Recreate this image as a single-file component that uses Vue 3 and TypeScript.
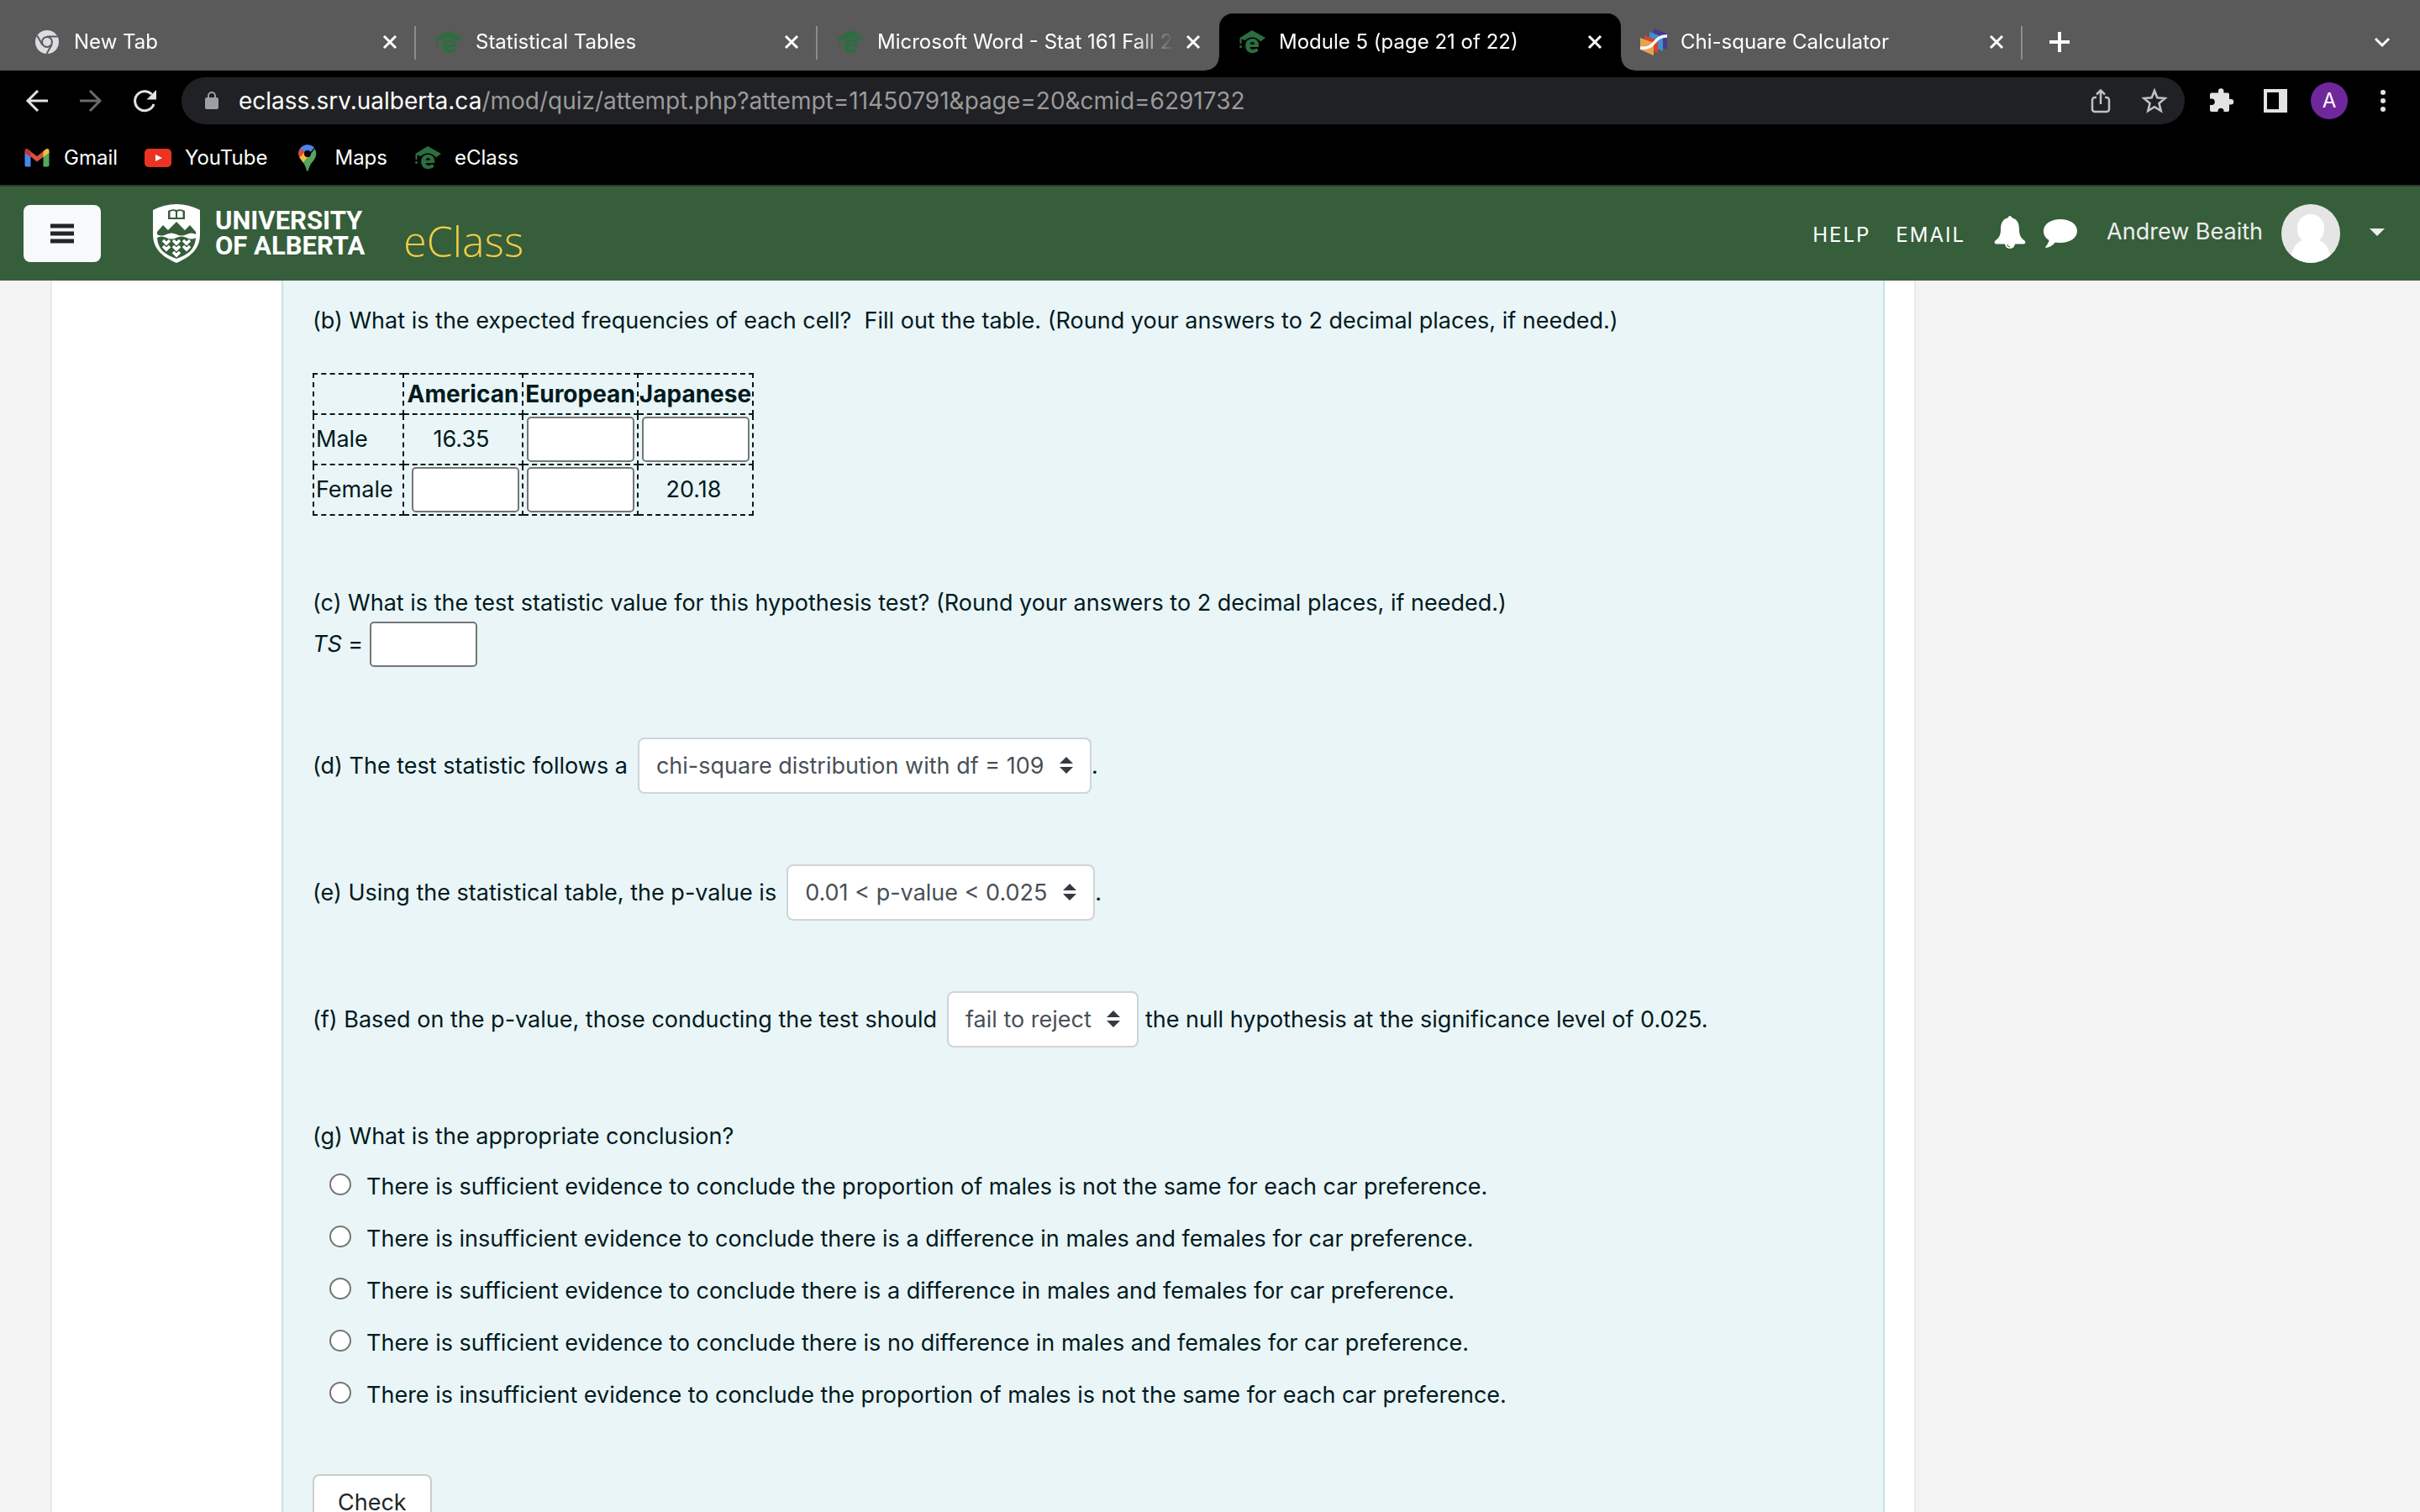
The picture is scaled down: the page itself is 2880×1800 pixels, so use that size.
<script setup lang="ts">
import { ref } from 'vue'

interface Tab {
  title: string
  icon: 'chrome' | 'eclass' | 'stats'
  active?: boolean
}

const tabs: Tab[] = [
  { title: 'New Tab', icon: 'chrome' },
  { title: 'Statistical Tables', icon: 'eclass' },
  { title: 'Microsoft Word - Stat 161 Fall 2', icon: 'eclass' },
  { title: 'Module 5 (page 21 of 22)', icon: 'eclass', active: true },
  { title: 'Chi-square Calculator', icon: 'stats' },
]

const conclusions: string[] = [
  'There is sufficient evidence to conclude the proportion of males is not the same for each car preference.',
  'There is insufficient evidence to conclude there is a difference in males and females for car preference.',
  'There is sufficient evidence to conclude there is a difference in males and females for car preference.',
  'There is sufficient evidence to conclude there is no difference in males and females for car preference.',
  'There is insufficient evidence to conclude the proportion of males is not the same for each car preference.',
]

const maleEuropean = ref('')
const maleJapanese = ref('')
const femaleAmerican = ref('')
const femaleEuropean = ref('')
const testStatistic = ref('')
const conclusion = ref<number | null>(null)
</script>

<template>
  <div class="browser">
    <nav class="tabs" aria-label="Tabs">
      <div v-for="(tab, i) in tabs" :key="i" class="tab" :class="{ active: tab.active, plain: i === 2 }">
        <svg v-if="tab.icon === 'chrome'" class="fav" viewBox="0 0 32 32">
          <circle cx="16" cy="16" r="14" fill="#dcdde0" />
          <circle cx="16" cy="16" r="6" fill="#dcdde0" stroke="#5a5a5a" stroke-width="2" />
          <path d="M16 9.500H28.500M10.400 19.300 4.200 8.600M21.600 19.300 15.600 29.800" stroke="#5a5a5a" stroke-width="2" fill="none" />
        </svg>
        <svg v-else-if="tab.icon === 'eclass'" class="fav cap" viewBox="0 0 32 32">
          <path d="M16 2 32 11 26 15.500C22 9.500 12 8.500 8 14L3.500 12.500V18H1.500V11Z" />
          <circle cx="2.500" cy="21.500" r="1.500" />
          <text x="16" y="29" text-anchor="middle">e</text>
        </svg>
        <svg v-else class="fav" viewBox="0 0 32 32">
          <path d="M16 0 32 6V25L16 18Z" fill="#4c3790" />
          <path d="M11 4 27 10V27L11 20Z" fill="#3e8fd0" />
          <path d="M5 8 21 14V29L5 23Z" fill="#d3462f" />
          <path d="M0 11 16 17V32L0 25Z" fill="#e6a44c" />
          <path d="M0 23C19 26 15 8 32 9" stroke="#fff" stroke-width="3.500" fill="none" />
        </svg>
        <span class="tab-title">{{ tab.title }}</span>
        <button class="icon-btn" aria-label="Close tab">
          <svg width="18" height="18" viewBox="0 0 18 18"><path d="M2 2 16 16M16 2 2 16" stroke="#fff" stroke-width="3" /></svg>
        </button>
      </div>
      <button class="icon-btn new-tab" aria-label="New tab">
        <svg width="26" height="26" viewBox="0 0 26 26"><path d="M13 1V25M1 13H25" stroke="#fff" stroke-width="4" /></svg>
      </button>
      <button class="icon-btn tab-search" aria-label="Search tabs">
        <svg width="20" height="20" viewBox="0 0 20 20"><path d="M2 6 10 14 18 6" stroke="#fff" stroke-width="3" fill="none" /></svg>
      </button>
    </nav>

    <div class="toolbar">
      <div class="nav-btns">
        <button class="icon-btn" aria-label="Back">
          <svg width="32" height="32" viewBox="0 0 32 32"><path d="M29 16H5M17 4 5 16 17 28" stroke="#e3e3e3" stroke-width="3" fill="none" /></svg>
        </button>
        <button class="icon-btn" aria-label="Forward">
          <svg width="32" height="32" viewBox="0 0 32 32"><path d="M3 16H27M15 4 27 16 15 28" stroke="#6a6a6a" stroke-width="3" fill="none" /></svg>
        </button>
        <button class="icon-btn" aria-label="Reload">
          <svg width="32" height="32" viewBox="0 0 32 32">
            <path d="M27 20A11.500 11.500 0 1 1 24.500 8.300" stroke="#e3e3e3" stroke-width="3" fill="none" />
            <path d="M30 3V14.500H18.500Z" fill="#e3e3e3" />
          </svg>
        </button>
      </div>
      <div class="omnibox">
        <svg width="20" height="24" viewBox="0 0 20 24">
          <rect x="2" y="8" width="16" height="14" rx="2" fill="#9aa0a6" />
          <path d="M6 9V6A4 4 0 0 1 14 6V9" stroke="#9aa0a6" stroke-width="2" fill="none" />
        </svg>
        <span class="url"><b>eclass.srv.ualberta.ca</b>/mod/quiz/attempt.php?attempt=11450791&amp;page=20&amp;cmid=6291732</span>
        <button class="icon-btn" aria-label="Share">
          <svg width="32" height="32" viewBox="0 0 32 32">
            <path d="M11 12H9A3 3 0 0 0 6 15V26A3 3 0 0 0 9 29H23A3 3 0 0 0 26 26V15A3 3 0 0 0 23 12H21M16 20V4M11 8.500 16 3.500 21 8.500" stroke="#c0c1c4" stroke-width="2.500" fill="none" />
          </svg>
        </button>
        <button class="icon-btn" aria-label="Bookmark this page">
          <svg width="32" height="32" viewBox="0 0 32 32">
            <path d="M16 4 19.300 12.300 28.500 13 21.500 19 23.700 28 16 23.200 8.300 28 10.500 19 3.500 13 12.700 12.300Z" stroke="#c0c1c4" stroke-width="2.600" fill="none" />
          </svg>
        </button>
      </div>
      <div class="actions">
        <button class="icon-btn" aria-label="Extensions">
          <svg width="32" height="32" viewBox="0 0 32 32">
            <path d="M12 6.500V4.500A3.200 3.200 0 0 1 18.400 4.500V6.500H23A2 2 0 0 1 25 8.500V14H27A3.200 3.200 0 0 1 27 20.400H25V27A2 2 0 0 1 23 29H18.500V27.500A3.600 3.600 0 0 0 11.500 27.500V29H4A2 2 0 0 1 2 27V21H4A3.600 3.600 0 0 0 4 13.500H2V8.500A2 2 0 0 1 4 6.500Z" fill="#e3e3e3" />
          </svg>
        </button>
        <button class="icon-btn" aria-label="Side panel">
          <svg width="32" height="32" viewBox="0 0 32 32"><path d="M2 2H30V30H2ZM6 6V26H20V6Z" fill="#e3e3e3" fill-rule="evenodd" /></svg>
        </button>
        <button class="profile" aria-label="Profile">A</button>
        <button class="icon-btn" aria-label="Menu">
          <svg width="32" height="32" viewBox="0 0 32 32" fill="#e3e3e3"><circle cx="16" cy="6" r="3" /><circle cx="16" cy="16" r="3" /><circle cx="16" cy="26" r="3" /></svg>
        </button>
      </div>
    </div>

    <nav class="bookmarks" aria-label="Bookmarks">
      <a href="#">
        <svg width="32" height="32" viewBox="0 0 32 32">
          <path d="M1.500 9V24.500A2 2 0 0 0 3.500 26.500H8.500V14Z" fill="#4c86ee" />
          <path d="M23.500 14V26.500H28.500A2 2 0 0 0 30.500 24.500V9Z" fill="#58a55c" />
          <path d="M8 14V8L16 14 24 8V14.500L16 20.500Z" fill="#d9503f" />
          <path d="M1.500 10V7.500C1.500 4.500 4.500 4.500 6 6L8.500 8V15Z" fill="#b63a31" />
          <path d="M30.500 10V7.500C30.500 4.500 27.500 4.500 26 6L23.500 8V15Z" fill="#f2bd42" />
        </svg>
        Gmail
      </a>
      <a href="#">
        <svg width="32" height="32" viewBox="0 0 32 32">
          <rect y="5" width="32" height="22" rx="5" fill="#ea3323" />
          <path d="M13 12 21 16 13 20Z" fill="#fff" />
        </svg>
        YouTube
      </a>
      <a href="#">
        <svg width="32" height="32" viewBox="0 0 32 32">
          <path d="M7 5C11-1 20-1 24 4L10 20 7 16C4.500 12 5 8 7 5Z" fill="#4f83e8" />
          <path d="M7.500 4.500 13 9 7 16C4.500 12 4.800 8 7.500 4.500Z" fill="#dd4b3e" />
          <path d="M13 9 6.500 15.500 11 22 20 11Z" fill="#f2bd42" />
          <path d="M24.500 5C28 11 26 16 22 20.500 19 24 18 27 16.500 31.500H15C14 27 13 25 11 22L20 11Z" fill="#58a55c" />
          <circle cx="16" cy="11" r="4" fill="#000" />
        </svg>
        Maps
      </a>
      <a href="#">
        <svg class="cap" width="32" height="32" viewBox="0 0 32 32">
          <path d="M16 2 32 11 26 15.500C22 9.500 12 8.500 8 14L3.500 12.500V18H1.500V11Z" />
          <circle cx="2.500" cy="21.500" r="1.500" />
          <text x="16" y="29" text-anchor="middle">e</text>
        </svg>
        eClass
      </a>
    </nav>

    <header class="site-header">
      <button class="burger" aria-label="Side panel">
        <svg width="28" height="24" viewBox="0 0 28 24"><path d="M0 3H28M0 12H28M0 21H28" stroke="#212529" stroke-width="5" /></svg>
      </button>
      <a class="brand" href="#">
        <svg width="56" height="70" viewBox="0 0 56 70">
          <path d="M0 7Q14 0 28 0T56 7V36C56 54 44 63 28 70 12 63 0 54 0 36Z" fill="#fff" />
          <path d="M18 8Q23 5 28 7 33 5 38 8V18H18Z" fill="#365e3b" />
          <path d="M20.500 9Q24 7 27 9V16H20.500ZM29 9Q32 7 35.500 9V16H29Z" fill="#fff" />
          <path d="M5 36V33L12 25 18 31 28 21 38 31 44 25 51 33V36Q46 33 40 36T28 36 16 36 5 36Z" fill="#365e3b" />
          <path d="M5 40Q10 37 16 40T28 40 40 40 51 40C50 54 42 60 28 65 14 60 6 54 5 40Z" fill="#365e3b" />
          <path d="M12 43 16 47 20 43M12 50 16 54 20 50M24 43 28 47 32 43M24 50 28 54 32 50M24 57 28 61 32 57M36 43 40 47 44 43M36 50 40 54 44 50" stroke="#fff" stroke-width="3.500" fill="none" />
        </svg>
        <span class="wordmark">UNIVERSITY<br />OF ALBERTA</span>
        <span class="product">eClass</span>
      </a>
      <nav class="links">
        <a href="#">HELP</a>
        <a href="#">EMAIL</a>
      </nav>
      <button class="icon-btn bell" aria-label="Notifications">
        <svg width="38" height="40" viewBox="0 0 38 40">
          <path d="M17 3A2 2 0 0 1 21 3C28 5 30 10 30 17 30 25 33 28 37 31 38 33 37 34.500 35 34.500H3C1 34.500 0 33 1 31 5 28 8 25 8 17 8 10 10 5 17 3Z" fill="#fff" />
          <path d="M13 34A6 6 0 0 0 25 34Z" fill="#fff" />
          <path d="M16 35A3 3 0 0 0 19 38" stroke="#365e3b" fill="none" />
        </svg>
      </button>
      <button class="icon-btn" aria-label="Messages">
        <svg width="42" height="36" viewBox="0 0 42 36">
          <path d="M21 1C32 1 41 6.500 41 15S32 29 21 29C19 29 17 29 15 28.500 12 32 8 34.500 4 35 3 35 3 34 4 33 6 31 7 28 7.500 26 3.500 23.500 1 20 1 15 1 6.500 10 1 21 1Z" fill="#fff" />
        </svg>
      </button>
      <button class="user">
        <span class="user-name">Andrew Beaith</span>
        <svg width="70" height="70" viewBox="0 0 70 70">
          <clipPath id="face"><circle cx="35" cy="35" r="35" /></clipPath>
          <g clip-path="url(#face)">
            <rect width="70" height="70" fill="#e5e5e5" />
            <path d="M35 12C45 12 51 20 51 29 51 36 49 40 45 43 54 46 58 56 60 70H10C12 56 16 46 25 43 21 40 19 36 19 29 19 20 25 12 35 12Z" fill="#fff" />
          </g>
        </svg>
        <svg class="caret" width="18" height="9" viewBox="0 0 18 9"><path d="M0 0H18L9 9Z" fill="#eee" /></svg>
      </button>
    </header>

    <main class="page">
      <section class="sheet">
        <form class="question" @submit.prevent>
          <p>(b) What is the expected frequencies of each cell?&nbsp; Fill out the table. (Round your answers to 2 decimal places, if needed.)</p>

          <table class="freq">
            <thead>
              <tr>
                <td></td>
                <th scope="col">American</th>
                <th scope="col">European</th>
                <th scope="col">Japanese</th>
              </tr>
            </thead>
            <tbody>
              <tr>
                <td class="row-name">Male</td>
                <td class="value">16.35</td>
                <td><input v-model="maleEuropean" type="text" aria-label="Male, European" /></td>
                <td><input v-model="maleJapanese" type="text" aria-label="Male, Japanese" /></td>
              </tr>
              <tr>
                <td class="row-name">Female</td>
                <td class="end"><input v-model="femaleAmerican" type="text" aria-label="Female, American" /></td>
                <td><input v-model="femaleEuropean" type="text" aria-label="Female, European" /></td>
                <td class="value">20.18</td>
              </tr>
            </tbody>
          </table>

          <p class="part">(c) What is the test statistic value for this hypothesis test? (Round your answers to 2 decimal places, if needed.)</p>
          <div class="row">
            <label for="ts"><i>TS</i> =</label>
            <input id="ts" v-model="testStatistic" type="text" />
          </div>

          <div class="row part">
            <label for="dist">(d) The test statistic follows a</label>
            <span class="select">
              <select id="dist"><option>chi-square distribution with df = 109</option></select>
              <svg width="16" height="20" viewBox="0 0 16 20"><path d="M8 0 16 8H0ZM0 12H16L8 20Z" fill="#343a40" /></svg>
            </span>
            <span class="stop">.</span>
          </div>

          <div class="row part">
            <label for="pval">(e) Using the statistical table, the p-value is</label>
            <span class="select">
              <select id="pval"><option>0.01 &lt; p-value &lt; 0.025</option></select>
              <svg width="16" height="20" viewBox="0 0 16 20"><path d="M8 0 16 8H0ZM0 12H16L8 20Z" fill="#343a40" /></svg>
            </span>
            <span class="stop">.</span>
          </div>

          <div class="row part">
            <label for="decision">(f) Based on the p-value, those conducting the test should</label>
            <span class="select">
              <select id="decision"><option>fail to reject</option></select>
              <svg width="16" height="20" viewBox="0 0 16 20"><path d="M8 0 16 8H0ZM0 12H16L8 20Z" fill="#343a40" /></svg>
            </span>
            <span>the null hypothesis at the significance level of 0.025.</span>
          </div>

          <p class="part">(g) What is the appropriate conclusion?</p>
          <div class="choices">
            <label v-for="(text, i) in conclusions" :key="i">
              <input v-model="conclusion" type="radio" name="conclusion" :value="i" />
              <span>{{ text }}</span>
            </label>
          </div>

          <button class="check" type="submit">Check</button>
        </form>
      </section>
    </main>
  </div>
</template>

<style>
html,
body {
  margin: 0;
  overflow: hidden;
}
</style>

<style scoped>
.browser {
  display: flex;
  flex-direction: column;
  height: 100vh;
  overflow: hidden;
  background: #f3f3f3;
  color: #001a1e;
  font-family: Inter, "Liberation Sans", sans-serif;
  font-size: 27px;
  line-height: 44px;
}
.browser * {
  box-sizing: border-box;
}
.browser svg {
  display: block;
  flex: none;
  overflow: visible;
}
button {
  font: inherit;
  cursor: pointer;
}
a {
  color: inherit;
  text-decoration: none;
}
.icon-btn {
  display: flex;
  flex: none;
  padding: 0;
  border: 0;
  background: none;
}

/* Browser chrome */
.tabs {
  display: flex;
  flex: none;
  height: 84px;
  padding: 16px 32px 0 17px;
  background: #5a5a5a;
  color: #fff;
  font-size: 24px;
}
.tab {
  position: relative;
  display: flex;
  align-items: center;
  width: 478px;
  padding: 0 22px 0 23px;
}
.tab::after {
  content: "";
  position: absolute;
  right: 0;
  top: 15px;
  width: 2px;
  height: 40px;
  background: #8c8c8c;
}
.tab.plain::after {
  display: none;
}
.tab.active {
  border-radius: 16px 16px 0 0;
  background: #000;
}
.tab.active::before,
.tab.active::after {
  content: "";
  position: absolute;
  top: auto;
  bottom: 0;
  width: 16px;
  height: 16px;
}
.tab.active::before {
  left: -16px;
  background: radial-gradient(circle at 0 0, #5a5a5a 15px, #000 16px);
}
.tab.active::after {
  right: -16px;
  background: radial-gradient(circle at 100% 0, #5a5a5a 15px, #000 16px);
}
.fav {
  width: 32px;
  height: 32px;
}
.cap {
  fill: #2c6e3f;
  font-family: Roboto, "Liberation Sans", sans-serif;
  font-size: 32px;
  font-weight: 900;
  line-height: 32px;
}
.tab-title {
  flex: 1;
  margin: 0 14px 0 16px;
  white-space: nowrap;
  mask-image: linear-gradient(to left, transparent, #000 48px);
}
.new-tab {
  align-self: center;
  margin-left: 31px;
}
.tab-search {
  align-self: center;
  margin-left: auto;
  margin-right: 3px;
}
.toolbar {
  display: flex;
  flex: none;
  align-items: center;
  height: 72px;
  padding: 0 28px;
  background: #000;
}
.nav-btns {
  display: flex;
  gap: 32px;
  margin-right: 28px;
}
.omnibox {
  display: flex;
  flex: 1;
  align-items: center;
  gap: 32px;
  height: 56px;
  padding: 0 20px 0 26px;
  border-radius: 28px;
  background: #202124;
}
.url {
  flex: 1;
  margin-left: -20px;
  padding-left: 10px;
  color: #9a9a9b;
  font-size: 28px;
}
.url b {
  color: #fff;
  font-weight: 400;
}
.actions {
  display: flex;
  align-items: center;
  gap: 32px;
  margin-left: 28px;
}
.profile {
  width: 44px;
  height: 44px;
  margin: 0 -6px;
  padding: 0;
  border: 0;
  border-radius: 50%;
  background: #71279c;
  color: #fff;
  font-size: 24px;
  line-height: 44px;
}
.bookmarks {
  display: flex;
  flex: none;
  align-items: center;
  gap: 32px;
  height: 66px;
  padding: 0 28px;
  border-bottom: 2px solid #353535;
  background: #000;
  color: #fff;
  font-size: 24px;
}
.bookmarks a {
  display: flex;
  align-items: center;
  gap: 16px;
}

/* Site header */
.site-header {
  display: flex;
  flex: none;
  align-items: center;
  height: 112px;
  padding: 0 42px 0 28px;
  background: #365e3b;
  color: #fff;
}
.burger {
  display: grid;
  place-items: center;
  width: 92px;
  height: 68px;
  border: 0;
  border-radius: 8px;
  background: #f8f9fa;
}
.brand {
  display: flex;
  align-items: center;
  margin: 0 auto 0 62px;
}
.wordmark {
  margin-left: 18px;
  font-family: Roboto, "Liberation Sans", sans-serif;
  font-size: 31px;
  font-weight: 700;
  line-height: 30px;
}
.product {
  margin: 18px 0 0 46px;
  color: #f2cd44;
  font-family: "Open Sans", "Liberation Sans", sans-serif;
  font-size: 50px;
  font-weight: 300;
  line-height: 56px;
}
.links {
  display: flex;
  gap: 30px;
  margin: 4px 34px 0 0;
  font-size: 24px;
  letter-spacing: 2px;
}
.bell {
  margin: 0 20px 4px 0;
}
.user {
  display: flex;
  align-items: center;
  margin-left: 34px;
  padding: 0;
  border: 0;
  background: none;
  color: #eee;
}
.user-name {
  margin-right: 22px;
  padding-bottom: 4px;
}
.caret {
  margin: 0 0 4px 35px;
}

/* Page */
.page {
  display: flex;
  flex: 1;
  min-height: 0;
  padding: 0 600px 0 60px;
}
.sheet {
  flex: 1;
  padding: 0 35px 0 273px;
  border: solid #e9e9e9;
  border-width: 0 2px;
  background: #fff;
}
.question {
  padding: 26px 36px 26px 35px;
  border: solid #c3e3e8;
  border-width: 0 2px;
  background: #eaf5f7;
}
p {
  margin: 0;
}
.part {
  margin-top: 84px;
}
.freq + .part {
  margin-top: 82px;
}
input[type="text"] {
  display: block;
  width: 128px;
  height: 54px;
  padding: 2px 4px;
  border: 2px solid #767676;
  border-radius: 5px;
  background: #fff;
  font: inherit;
}
.freq {
  margin-top: 40px;
  width: 523px;
  table-layout: fixed;
  border-collapse: collapse;
  text-align: center;
}
.freq th,
.freq td {
  width: 137px;
  height: 60px;
  padding: 0;
  border: 2px dashed #001a1e;
}
.freq thead th,
.freq thead td {
  height: 48px;
}
.freq tr > :first-child {
  width: 107px;
}
.freq tr > :nth-child(2) {
  width: 142px;
}
.freq th {
  font-size: 28px;
  font-weight: 700;
}
.freq .row-name {
  padding-left: 2px;
  text-align: left;
}
.freq .value {
  padding-right: 4px;
}
.freq input {
  margin: 0 auto;
}
.freq .end input {
  margin-right: 3px;
}
.row {
  display: flex;
  align-items: center;
  gap: 8px;
}
.select {
  position: relative;
  margin-left: 4px;
}
.select select {
  display: block;
  height: 67px;
  padding: 0 54px 0 20px;
  border: 2px solid #ced4da;
  border-radius: 8px;
  background: #fff;
  color: #495057;
  font: inherit;
  appearance: none;
}
.select svg {
  position: absolute;
  top: 23px;
  right: 22px;
  pointer-events: none;
}
.stop {
  margin-left: -8px;
}
.choices {
  display: flex;
  flex-direction: column;
  gap: 18px;
  margin: 16px 0 72px 20px;
}
.choices label {
  display: flex;
  gap: 18px;
}
.choices input {
  flex: none;
  width: 26px;
  height: 26px;
  margin: 6px 0 0;
  border: 2px solid #767676;
  border-radius: 50%;
  background: #fff;
  appearance: none;
}
.choices input:checked {
  border-width: 8px;
}
.check {
  height: 68px;
  padding: 0 28px;
  border: 2px solid #ccc;
  border-radius: 8px;
  background: #fff;
  color: #212529;
}
</style>
